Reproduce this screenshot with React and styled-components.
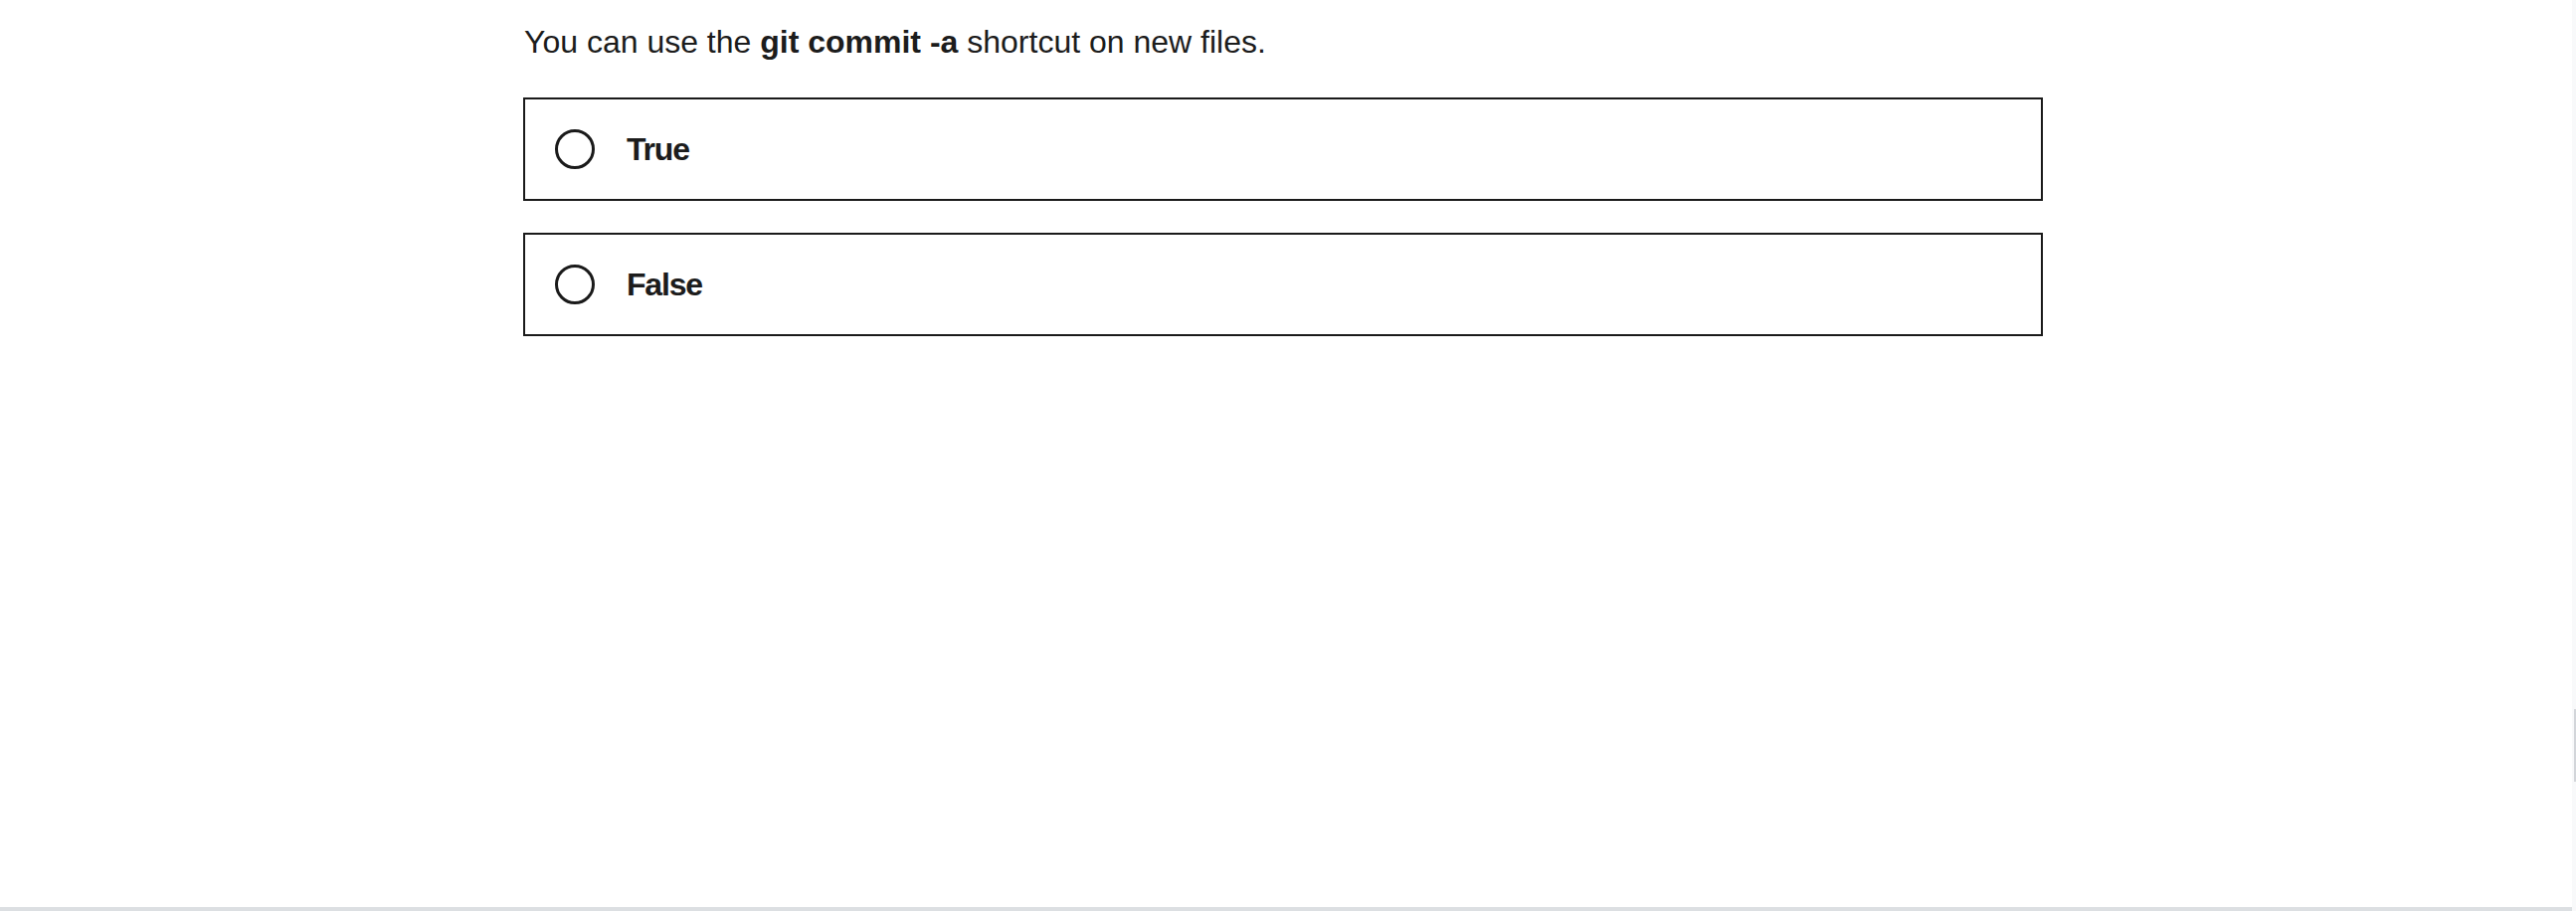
import React, { useState } from "react";
import styled, { createGlobalStyle } from "styled-components";

const GlobalStyle = createGlobalStyle`
  html, body {
    margin: 0;
    padding: 0;
    background: #ffffff;
    overflow: hidden;
  }
  * {
    box-sizing: border-box;
  }
`;

const options = ["True", "False"];

const Page = styled.div`
  display: grid;
  grid-template-columns: 1fr 4px;
  grid-template-rows: 1fr 4px;
  width: 100vw;
  height: 100vh;
  font-family: "Liberation Sans", Arial, sans-serif;
  color: #1c1c1c;
`;

const Main = styled.main`
  overflow: hidden;
`;

const Track = styled.div`
  grid-row: 1 / 3;
  grid-column: 2;
  background: #f8f9fa;
  display: flex;
  flex-direction: column;
  align-items: flex-end;
`;

const Thumb = styled.div`
  margin-top: 713px;
  width: 2px;
  height: 73px;
  background: #d3d6da;
`;

const BottomBar = styled.div`
  grid-row: 2;
  grid-column: 1;
  background: #dcdfe2;
`;

const Quiz = styled.section`
  width: 1528px;
  margin-left: 526px;
  padding-top: 18px;
`;

const Question = styled.p`
  margin: 0 0 32px 1px;
  font-size: 32px;
  line-height: 48px;

  strong {
    font-weight: 700;
  }
`;

const OptionList = styled.div`
  display: flex;
  flex-direction: column;
  gap: 32px;
`;

const Option = styled.label`
  display: flex;
  align-items: center;
  gap: 32px;
  height: 104px;
  padding: 0 30px;
  border: 2px solid #1a1a1a;
  cursor: pointer;
`;

const Radio = styled.span`
  flex: none;
  width: 40px;
  height: 40px;
  border-radius: 50%;
  border: 3.5px solid #1a1a1a;
  background: ${(p) => (p.checked ? "radial-gradient(#1a1a1a 45%, #fff 50%)" : "#fff")};
`;

const Label = styled.span`
  font-size: 32px;
  font-weight: 700;
  letter-spacing: -1.2px;
  line-height: 1;
`;

export default function App() {
  const [picked, setPicked] = useState(null);

  return (
    <>
      <GlobalStyle />
      <Page>
        <Main>
          <Quiz>
            <Question>
              You can use the <strong>git commit -a</strong> shortcut on new files.
            </Question>
            <OptionList>
              {options.map((opt) => (
                <Option key={opt} onClick={() => setPicked(opt)}>
                  <Radio checked={picked === opt} />
                  <Label>{opt}</Label>
                </Option>
              ))}
            </OptionList>
          </Quiz>
        </Main>
        <Track>
          <Thumb />
        </Track>
        <BottomBar />
      </Page>
    </>
  );
}
